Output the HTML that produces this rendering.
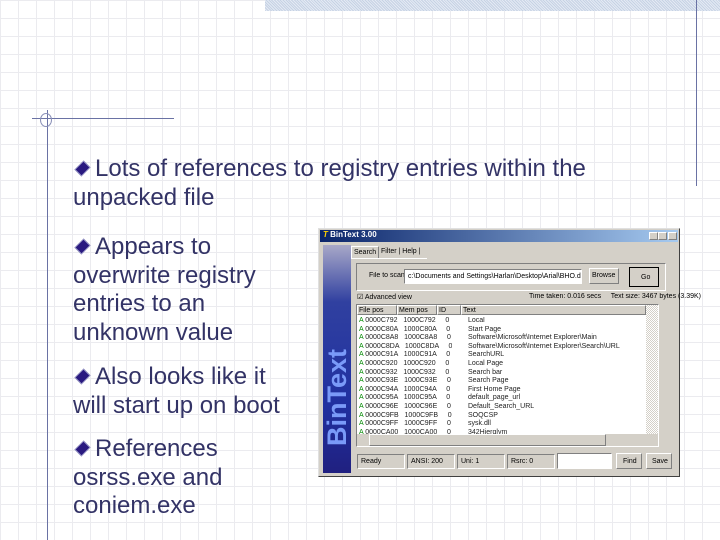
<!DOCTYPE html>
<html><head><meta charset="utf-8"><style>
*{margin:0;padding:0;box-sizing:border-box}
body{width:720px;height:540px;overflow:hidden;position:relative;background:#fff;
background-image:linear-gradient(to right,#ebebef 1px,transparent 1px),linear-gradient(to bottom,#ebebef 1px,transparent 1px);background-size:18px 18px;font-family:"Liberation Sans",sans-serif}
.abs{position:absolute}
.t{position:absolute;left:73px;color:#333366;font-size:24px;line-height:28.5px}
.d{display:inline-block;width:13px;height:13px;margin:0 6px 0 3px;transform:rotate(45deg) scaleX(.75);background:#2a1a80;border:1px solid #9a9ac8;vertical-align:1px}
.w{font-size:7px;color:#000;font-family:"Liberation Sans",sans-serif;white-space:nowrap;overflow:hidden}
.b{border:1px solid;border-color:#fff #808080 #808080 #fff;background:#d4d0c8}
.s{border:1px solid;border-color:#808080 #fff #fff #808080}
</style></head><body>
<div class="abs" style="left:265px;top:0;width:455px;height:11px;background:repeating-linear-gradient(45deg,#c6d2e4 0 1px,#e4eaf4 1px 2px)"></div>
<div class="abs" style="left:696px;top:0;width:1px;height:186px;background:#6a72a4"></div>
<div class="abs" style="left:32px;top:118px;width:142px;height:1px;background:#6a72a4"></div>
<div class="abs" style="left:47px;top:110px;width:1px;height:430px;background:#6a72a4"></div>
<div class="abs" style="left:40px;top:113px;width:12px;height:14px;border:1px solid #8a90b8;border-radius:50%"></div>

<div class="t" style="top:155px"><span class="d"></span>Lots of references to registry entries within the<br>unpacked file</div>
<div class="t" style="top:233px"><span class="d"></span>Appears to<br>overwrite registry<br>entries to an<br>unknown value</div>
<div class="t" style="top:363px"><span class="d"></span>Also looks like it<br>will start up on boot</div>
<div class="t" style="top:435px"><span class="d"></span>References<br>osrss.exe and<br>coniem.exe</div>

<div class="abs" style="left:318px;top:228px;width:362px;height:249px;background:#d4d0c8;border:1px solid;border-color:#e0e0e0 #404040 #404040 #e0e0e0">
 <div class="abs" style="left:1px;top:1px;width:358px;height:12px;background:linear-gradient(to right,#0a246a,#a6caf0)"></div>
 <div class="abs w" style="left:4px;top:1px;color:#fff;font-weight:bold;font-size:8px"><span style="color:#ffd000;font-style:italic">T</span> BinText 3.00</div>
 <div class="abs b" style="left:330px;top:3px;width:9px;height:8px"></div>
 <div class="abs b" style="left:339px;top:3px;width:9px;height:8px"></div>
 <div class="abs b" style="left:349px;top:3px;width:9px;height:8px"></div>
 <div class="abs" style="left:4px;top:16px;width:28px;height:228px;background:linear-gradient(to bottom,#a8a8c8,#3040a0 25%,#2030a0 70%,#202080)"></div>
 <div class="abs" style="left:3px;top:217px;transform:rotate(-90deg);transform-origin:0 0;width:150px;font-size:27px;font-weight:bold;color:#7a9af8;line-height:30px">BinText</div>
 <div class="abs w" style="left:32px;top:17px;width:76px;height:13px;border-bottom:1px solid #fff">
  <span class="abs b" style="left:0;top:0;width:28px;height:13px;border-bottom:none;padding:2px">Search</span>
  <span class="abs" style="left:30px;top:2px">Filter | Help |</span></div>
 <div class="abs" style="left:37px;top:34px;width:310px;height:28px;border:1px solid;border-color:#808080 #fff #fff #808080"></div>
 <div class="abs w" style="left:50px;top:43px">File to scan</div>
 <div class="abs s w" style="left:85px;top:40px;width:178px;height:15px;background:#fff;padding:3px">c:\Documents and Settings\Harlan\Desktop\Arial\BHO.dll</div>
 <div class="abs b w" style="left:270px;top:39px;width:30px;height:16px;padding:3px 2px">Browse</div>
 <div class="abs b w" style="left:310px;top:38px;width:30px;height:20px;border:1px solid #000;padding:6px 11px">Go</div>
 <div class="abs w" style="left:38px;top:64px">&#9745; Advanced view</div>
 <div class="abs w" style="left:210px;top:64px">Time taken: 0.016 secs &nbsp;&nbsp;&nbsp; Text size: 3467 bytes (3.39K)</div>
 <div class="abs s" style="left:37px;top:75px;width:303px;height:143px;background:#fff">
  <div class="abs w" style="left:0;top:0;width:289px;height:10px;background:#d4d0c8">
   <span class="abs b" style="left:0;width:40px;height:10px;padding:1px">File pos</span>
   <span class="abs b" style="left:40px;width:40px;height:10px;padding:1px">Mem pos</span>
   <span class="abs b" style="left:80px;width:24px;height:10px;padding:1px">ID</span>
   <span class="abs b" style="left:104px;width:185px;height:10px;padding:1px">Text</span></div>
  <div class="abs w" style="left:2px;top:12px;line-height:8.6px;color:#222">
  <span style="color:#080">A</span> 0000C792 &nbsp;&nbsp;1000C792 &nbsp;&nbsp;&nbsp;&nbsp;0<br>
  <span style="color:#080">A</span> 0000C80A &nbsp;&nbsp;1000C80A &nbsp;&nbsp;&nbsp;&nbsp;0<br>
  <span style="color:#080">A</span> 0000C8A8 &nbsp;&nbsp;1000C8A8 &nbsp;&nbsp;&nbsp;&nbsp;0<br>
  <span style="color:#080">A</span> 0000C8DA &nbsp;&nbsp;1000C8DA &nbsp;&nbsp;&nbsp;&nbsp;0<br>
  <span style="color:#080">A</span> 0000C91A &nbsp;&nbsp;1000C91A &nbsp;&nbsp;&nbsp;&nbsp;0<br>
  <span style="color:#080">A</span> 0000C920 &nbsp;&nbsp;1000C920 &nbsp;&nbsp;&nbsp;&nbsp;0<br>
  <span style="color:#080">A</span> 0000C932 &nbsp;&nbsp;1000C932 &nbsp;&nbsp;&nbsp;&nbsp;0<br>
  <span style="color:#080">A</span> 0000C93E &nbsp;&nbsp;1000C93E &nbsp;&nbsp;&nbsp;&nbsp;0<br>
  <span style="color:#080">A</span> 0000C94A &nbsp;&nbsp;1000C94A &nbsp;&nbsp;&nbsp;&nbsp;0<br>
  <span style="color:#080">A</span> 0000C95A &nbsp;&nbsp;1000C95A &nbsp;&nbsp;&nbsp;&nbsp;0<br>
  <span style="color:#080">A</span> 0000C96E &nbsp;&nbsp;1000C96E &nbsp;&nbsp;&nbsp;&nbsp;0<br>
  <span style="color:#080">A</span> 0000C9FB &nbsp;&nbsp;1000C9FB &nbsp;&nbsp;&nbsp;&nbsp;0<br>
  <span style="color:#080">A</span> 0000C9FF &nbsp;&nbsp;1000C9FF &nbsp;&nbsp;&nbsp;&nbsp;0<br>
  <span style="color:#080">A</span> 0000CA00 &nbsp;&nbsp;1000CA00 &nbsp;&nbsp;&nbsp;&nbsp;0</div>
  <div class="abs w" style="left:111px;top:12px;line-height:8.6px;color:#222">Local<br>Start Page<br>Software\Microsoft\Internet Explorer\Main<br>Software\Microsoft\Internet Explorer\Search\URL<br>SearchURL<br>Local Page<br>Search bar<br>Search Page<br>First Home Page<br>default_page_url<br>Default_Search_URL<br>SOQCSP<br>sysk.dll<br>342Hierglym</div>
  <div class="abs" style="left:289px;top:0;width:12px;height:129px;background:repeating-conic-gradient(#d4d0c8 0 25%,#fff 0 50%) 0 0/2px 2px"></div>
  <div class="abs" style="left:0;top:129px;width:301px;height:12px;background:#d4d0c8"></div>
  <div class="abs b" style="left:12px;top:129px;width:237px;height:12px"></div>
 </div>
 <div class="abs s w" style="left:38px;top:225px;width:48px;height:15px;padding:3px">Ready</div>
 <div class="abs s w" style="left:88px;top:225px;width:48px;height:15px;padding:3px">ANSI: 200</div>
 <div class="abs s w" style="left:138px;top:225px;width:48px;height:15px;padding:3px">Uni: 1</div>
 <div class="abs s w" style="left:188px;top:225px;width:48px;height:15px;padding:3px">Rsrc: 0</div>
 <div class="abs s" style="left:238px;top:224px;width:55px;height:16px;background:#fff"></div>
 <div class="abs b w" style="left:297px;top:224px;width:26px;height:16px;padding:4px 6px">Find</div>
 <div class="abs b w" style="left:327px;top:224px;width:26px;height:16px;padding:4px 5px">Save</div>
</div>
</body></html>
